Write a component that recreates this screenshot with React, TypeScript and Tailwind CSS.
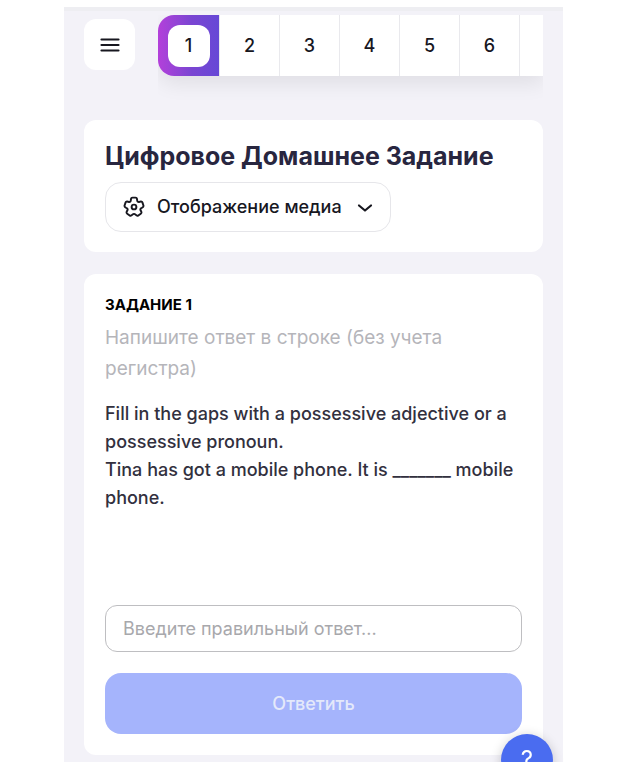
import * as React from "react";

const questions = [1, 2, 3, 4, 5, 6];

function GearIcon() {
    return (
        <svg className="h-[22px] w-[22px] shrink-0" viewBox="0 0 24 24" fill="none" stroke="currentColor" strokeWidth="2.1" strokeLinejoin="round">
            <path d="M10.4 1.75H13.600Q15.300 1.750 15.400 4.200Q15.500 7.200 18.200 6.300Q20.700 5.400 21.250 7.200L22.300 10.400Q22.800 12 20.500 13Q18 14 19.500 16.200Q20.900 18.300 19.400 19.300L16.700 21.300Q15.340 22.270 13.700 20.400Q12 18.600 10.300 20.400Q8.660 22.270 7.300 21.300L4.600 19.300Q3.100 18.300 4.500 16.200Q6 14 3.500 13Q1.200 12 1.700 10.400L2.750 7.200Q3.300 5.400 5.800 6.300Q8.500 7.200 8.600 4.200Q8.700 1.750 10.400 1.750z" />
            <circle cx="12" cy="12" r="2.6" />
        </svg>
    );
}

function TopBar() {
    const [current, setCurrent] = React.useState(1);

    return (
        <header className="flex items-start gap-[23px] px-5 pt-1">
            <button aria-label="Меню" className="mt-1 flex h-[51px] w-[51px] shrink-0 items-center justify-center rounded-xl bg-white">
                <svg className="h-5 w-5" viewBox="0 0 20 20" stroke="currentColor" strokeWidth="2.2" strokeLinecap="round">
                    <path d="M1.500 4.500h17M1.500 10h17M1.500 15.500h17" />
                </svg>
            </button>
            <nav className="min-w-0 flex-1 overflow-hidden pb-8">
                <div className="flex rounded-l-2xl bg-white shadow-[0_8px_20px_rgba(0,0,0,0.08)]">
                    {questions.map((n) => (
                        <button
                            key={n}
                            onClick={() => setCurrent(n)}
                            className={
                                n === current
                                    ? "flex h-[61px] w-[61px] shrink-0 items-center justify-center rounded-l-2xl bg-linear-to-r from-[#b33fda] via-[#7a45d2] via-55% to-[#6648d6]"
                                    : "flex h-[61px] w-[60px] shrink-0 items-center justify-center border-l border-[#e9e9ed] bg-white"
                            }
                        >
                            <span className="flex h-[42px] w-[42px] items-center justify-center rounded-xl bg-white text-lg font-medium">{n}</span>
                        </button>
                    ))}
                    <div className="flex-1 border-l border-[#e9e9ed]" />
                </div>
            </nav>
        </header>
    );
}

export default function App() {
    const [answer, setAnswer] = React.useState("");

    return (
        <div className="min-h-screen bg-white px-16 pt-[7px] font-['Inter','Liberation_Sans',sans-serif] text-[#17171f]">
            <main className="border-t-4 border-[#eeeef2] bg-[#f3f2f8] pb-[7px]">
                <TopBar />

                <div className="flex flex-col gap-[22px] px-5 pt-3">
                    <section className="rounded-xl bg-white px-[21px] py-5">
                        <h1 className="text-[25px] leading-8 font-bold text-[#28263f]">Цифровое Домашнее Задание</h1>
                        <button className="mt-[10px] flex h-[50px] items-center gap-3 rounded-2xl border border-[#e6e6ea] px-[17px] text-lg font-medium">
                            <GearIcon />
                            Отображение медиа
                            <svg className="ml-[3px] h-4 w-4" viewBox="0 0 16 16" fill="none" stroke="currentColor" strokeWidth="2.2" strokeLinecap="round" strokeLinejoin="round">
                                <path d="M2 6.500l6 5 6-5" />
                            </svg>
                        </button>
                    </section>

                    <section className="rounded-xl bg-white px-[21px] pt-5 pb-[21px]">
                        <h2 className="text-[15px] leading-[22px] font-bold text-black">ЗАДАНИЕ 1</h2>
                        <p className="mt-[6px] text-[19px] leading-[31px] text-[#b5b5ba]">Напишите ответ в строке (без учета регистра)</p>
                        <p className="mt-4 text-lg leading-7 font-medium text-[#32303e]">
                            Fill in the gaps with a possessive adjective or a possessive pronoun.
                            <br />
                            Tina has got a mobile phone. It is _______ mobile phone.
                        </p>
                        <input
                            aria-label="Ответ"
                            className="mt-[93px] block h-[47px] w-full rounded-xl border border-[#bebec1] px-[17px] text-lg placeholder:text-[#a8a8ac]"
                            placeholder="Введите правильный ответ..."
                            value={answer}
                            onChange={(e) => setAnswer(e.target.value)}
                        />
                        <button className="mt-[21px] block h-[61px] w-full rounded-2xl bg-[#a5b4fc] text-lg font-medium text-[#e4e9fa]">Ответить</button>
                    </section>
                </div>
            </main>

            {/* Help bubble */}
            <button aria-label="Помощь" className="fixed right-[74px] -bottom-6 flex h-[52px] w-[52px] items-center justify-center rounded-full bg-[#4a6cf0] text-2xl text-white shadow-[0_2px_12px_rgba(0,0,0,0.2)]">
                ?
            </button>
        </div>
    );
}
